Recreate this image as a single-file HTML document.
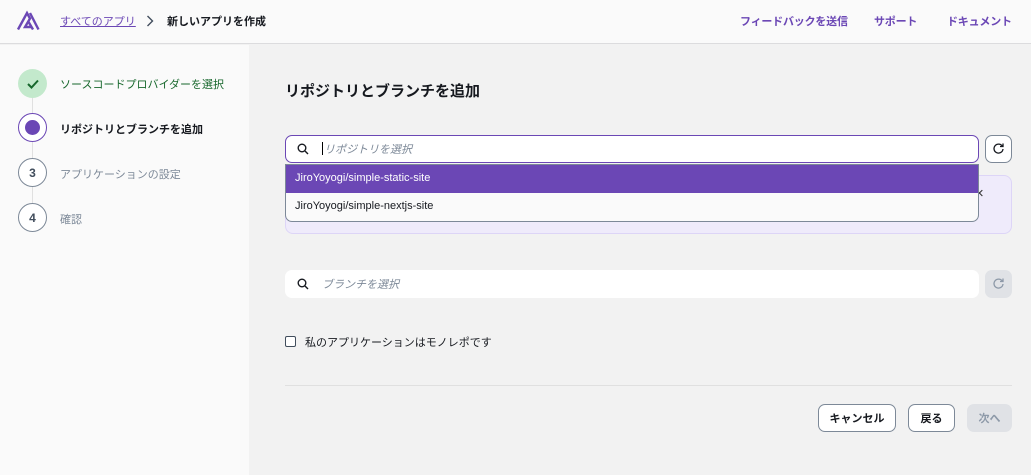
<!DOCTYPE html>
<html><head><meta charset="utf-8"><style>
*{box-sizing:border-box;margin:0;padding:0}
body{width:1031px;height:475px;overflow:hidden;background:#f2f2f2;font-family:"Liberation Sans","Noto Sans CJK JP",sans-serif;font-size:11px;color:#16191f;position:relative}
.top{position:absolute;left:0;top:0;width:1031px;height:44px;background:#fafafa;border-bottom:1px solid #dcdcde}
.abs{position:absolute}
.side{position:absolute;left:0;top:45px;width:249px;height:430px;background:#fafafa}
.circ{position:absolute;left:18px;width:29px;height:29px;border-radius:50%;display:flex;align-items:center;justify-content:center;font-weight:bold;font-size:12px}
.step{position:absolute;left:60px;font-size:11px}
.vl{position:absolute;left:32px;width:1px;background:#e0e0e0}
.box{position:absolute;border-radius:7px;background:#fff}
.btn{position:absolute;top:404px;height:28px;border:1px solid #7d8998;border-radius:7px;background:#fff;font-weight:bold;font-size:11px;display:flex;align-items:center;justify-content:center}
.hl{position:absolute;top:13px;color:#6b47b5;font-weight:bold;letter-spacing:-0.2px}
</style></head><body>
<div class="top">
<svg class="abs" style="left:16px;top:10px" width="24" height="21" viewBox="0 0 24 21"><path d="M2 19.5 L11 3 L14 8.5 L9 17 L16 17" stroke="#6b47b5" stroke-width="2.4" fill="none" stroke-linejoin="miter"/><path d="M14 3 L22.5 19.5 M12 11 L17 19.5" stroke="#6b47b5" stroke-width="2.4" fill="none"/></svg>
<span class="abs" style="left:60px;top:13px;color:#6b47b5;text-decoration:underline;font-size:11px">すべてのアプリ</span>
<svg class="abs" style="left:146px;top:15px" width="8" height="12"><path d="M1.5 1 L6.5 6 L1.5 11" stroke="#414d5c" stroke-width="1.4" fill="none"/></svg>
<span class="abs" style="left:167px;top:13px;font-weight:bold;font-size:11px">新しいアプリを作成</span>
<span class="hl" style="left:740px">フィードバックを送信</span>
<span class="hl" style="left:874px">サポート</span>
<span class="hl" style="left:947px">ドキュメント</span>
</div>
<div class="side">
<div class="vl" style="top:52px;height:120px"></div>
<div class="circ" style="top:24px;background:#c3e9cc"><svg width="12" height="10"><path d="M1 5 L4.5 8.5 L11 1.5" stroke="#17672c" stroke-width="2" fill="none"/></svg></div>
<div class="step" style="top:31px;color:#17672c">ソースコードプロバイダーを選択</div>
<div class="circ" style="top:68px;border:1.5px solid #6b47b5;background:#fff"><div style="width:15px;height:15px;border-radius:50%;background:#6b47b5"></div></div>
<div class="step" style="top:76px;font-weight:bold">リポジトリとブランチを追加</div>
<div class="circ" style="top:113px;border:1.5px solid #7d8998;background:#fff;color:#414d5c">3</div>
<div class="step" style="top:121px;color:#7d8998">アプリケーションの設定</div>
<div class="circ" style="top:158px;border:1.5px solid #7d8998;background:#fff;color:#414d5c">4</div>
<div class="step" style="top:166px;color:#7d8998">確認</div>
</div>
<div class="abs" style="left:285px;top:80px;font-size:15px;font-weight:bold">リポジトリとブランチを追加</div>
<div class="abs" style="left:285px;top:175px;width:727px;height:59px;background:#efebfb;border:1px solid #ddd5f7;border-radius:8px"></div>
<span class="abs" style="left:975px;top:185px;font-size:15px;color:#333">×</span>
<div class="box" style="left:285px;top:135px;width:694px;height:28px;border:1.5px solid #6b47b5"></div>
<svg class="abs" style="left:297px;top:143px" width="12" height="12"><circle cx="5" cy="5" r="3.8" stroke="#16191f" stroke-width="1.4" fill="none"/><path d="M8 8 L11 11" stroke="#16191f" stroke-width="1.4"/></svg>
<div class="abs" style="left:322px;top:142px;width:1px;height:13px;background:#000"></div>
<span class="abs" style="left:324px;top:141px;color:#7d8998;font-style:italic">リポジトリを選択</span>
<div class="box" style="left:985px;top:135px;width:27px;height:28px;border:1px solid #7d8998"></div>
<svg class="abs" style="left:992px;top:142px" width="13" height="13" viewBox="0 0 13 13"><path d="M10.5 4.5 A4.5 4.5 0 1 0 11 7" stroke="#16191f" stroke-width="1.3" fill="none"/><path d="M8 4.5 L11 4.5 L11 1.5" stroke="#16191f" stroke-width="1.3" fill="none"/></svg>
<div class="abs" style="left:285px;top:164px;width:694px;height:58px;border:1px solid #7d8998;border-radius:0 0 7px 7px;background:#fafafa;overflow:hidden">
<div style="height:28px;background:#6b47b5;color:#fff;padding:7px 0 0 9px">JiroYoyogi/simple-static-site</div>
<div style="padding:7px 0 0 9px">JiroYoyogi/simple-nextjs-site</div>
</div>
<div class="box" style="left:285px;top:270px;width:694px;height:28px"></div>
<svg class="abs" style="left:297px;top:278px" width="12" height="12"><circle cx="5" cy="5" r="3.8" stroke="#16191f" stroke-width="1.4" fill="none"/><path d="M8 8 L11 11" stroke="#16191f" stroke-width="1.4"/></svg>
<span class="abs" style="left:322px;top:276px;color:#7d8998;font-style:italic">ブランチを選択</span>
<div class="abs" style="left:985px;top:270px;width:27px;height:28px;border-radius:7px;background:#e0e2e6"></div>
<svg class="abs" style="left:992px;top:277px" width="13" height="13" viewBox="0 0 13 13"><path d="M10.5 4.5 A4.5 4.5 0 1 0 11 7" stroke="#8d99a8" stroke-width="1.3" fill="none"/><path d="M8 4.5 L11 4.5 L11 1.5" stroke="#8d99a8" stroke-width="1.3" fill="none"/></svg>
<div class="abs" style="left:285px;top:336px;width:11px;height:11px;border:1.5px solid #414d5c;border-radius:2px;background:#fff"></div>
<span class="abs" style="left:305px;top:334px">私のアプリケーションはモノレポです</span>
<div class="abs" style="left:285px;top:385px;width:727px;height:1px;background:#e0e0e0"></div>
<div class="btn" style="left:818px;width:78px">キャンセル</div>
<div class="btn" style="left:908px;width:47px">戻る</div>
<div class="btn" style="left:967px;width:45px;border:none;background:#e0e2e6;color:#8d99a8">次へ</div>
</body></html>
